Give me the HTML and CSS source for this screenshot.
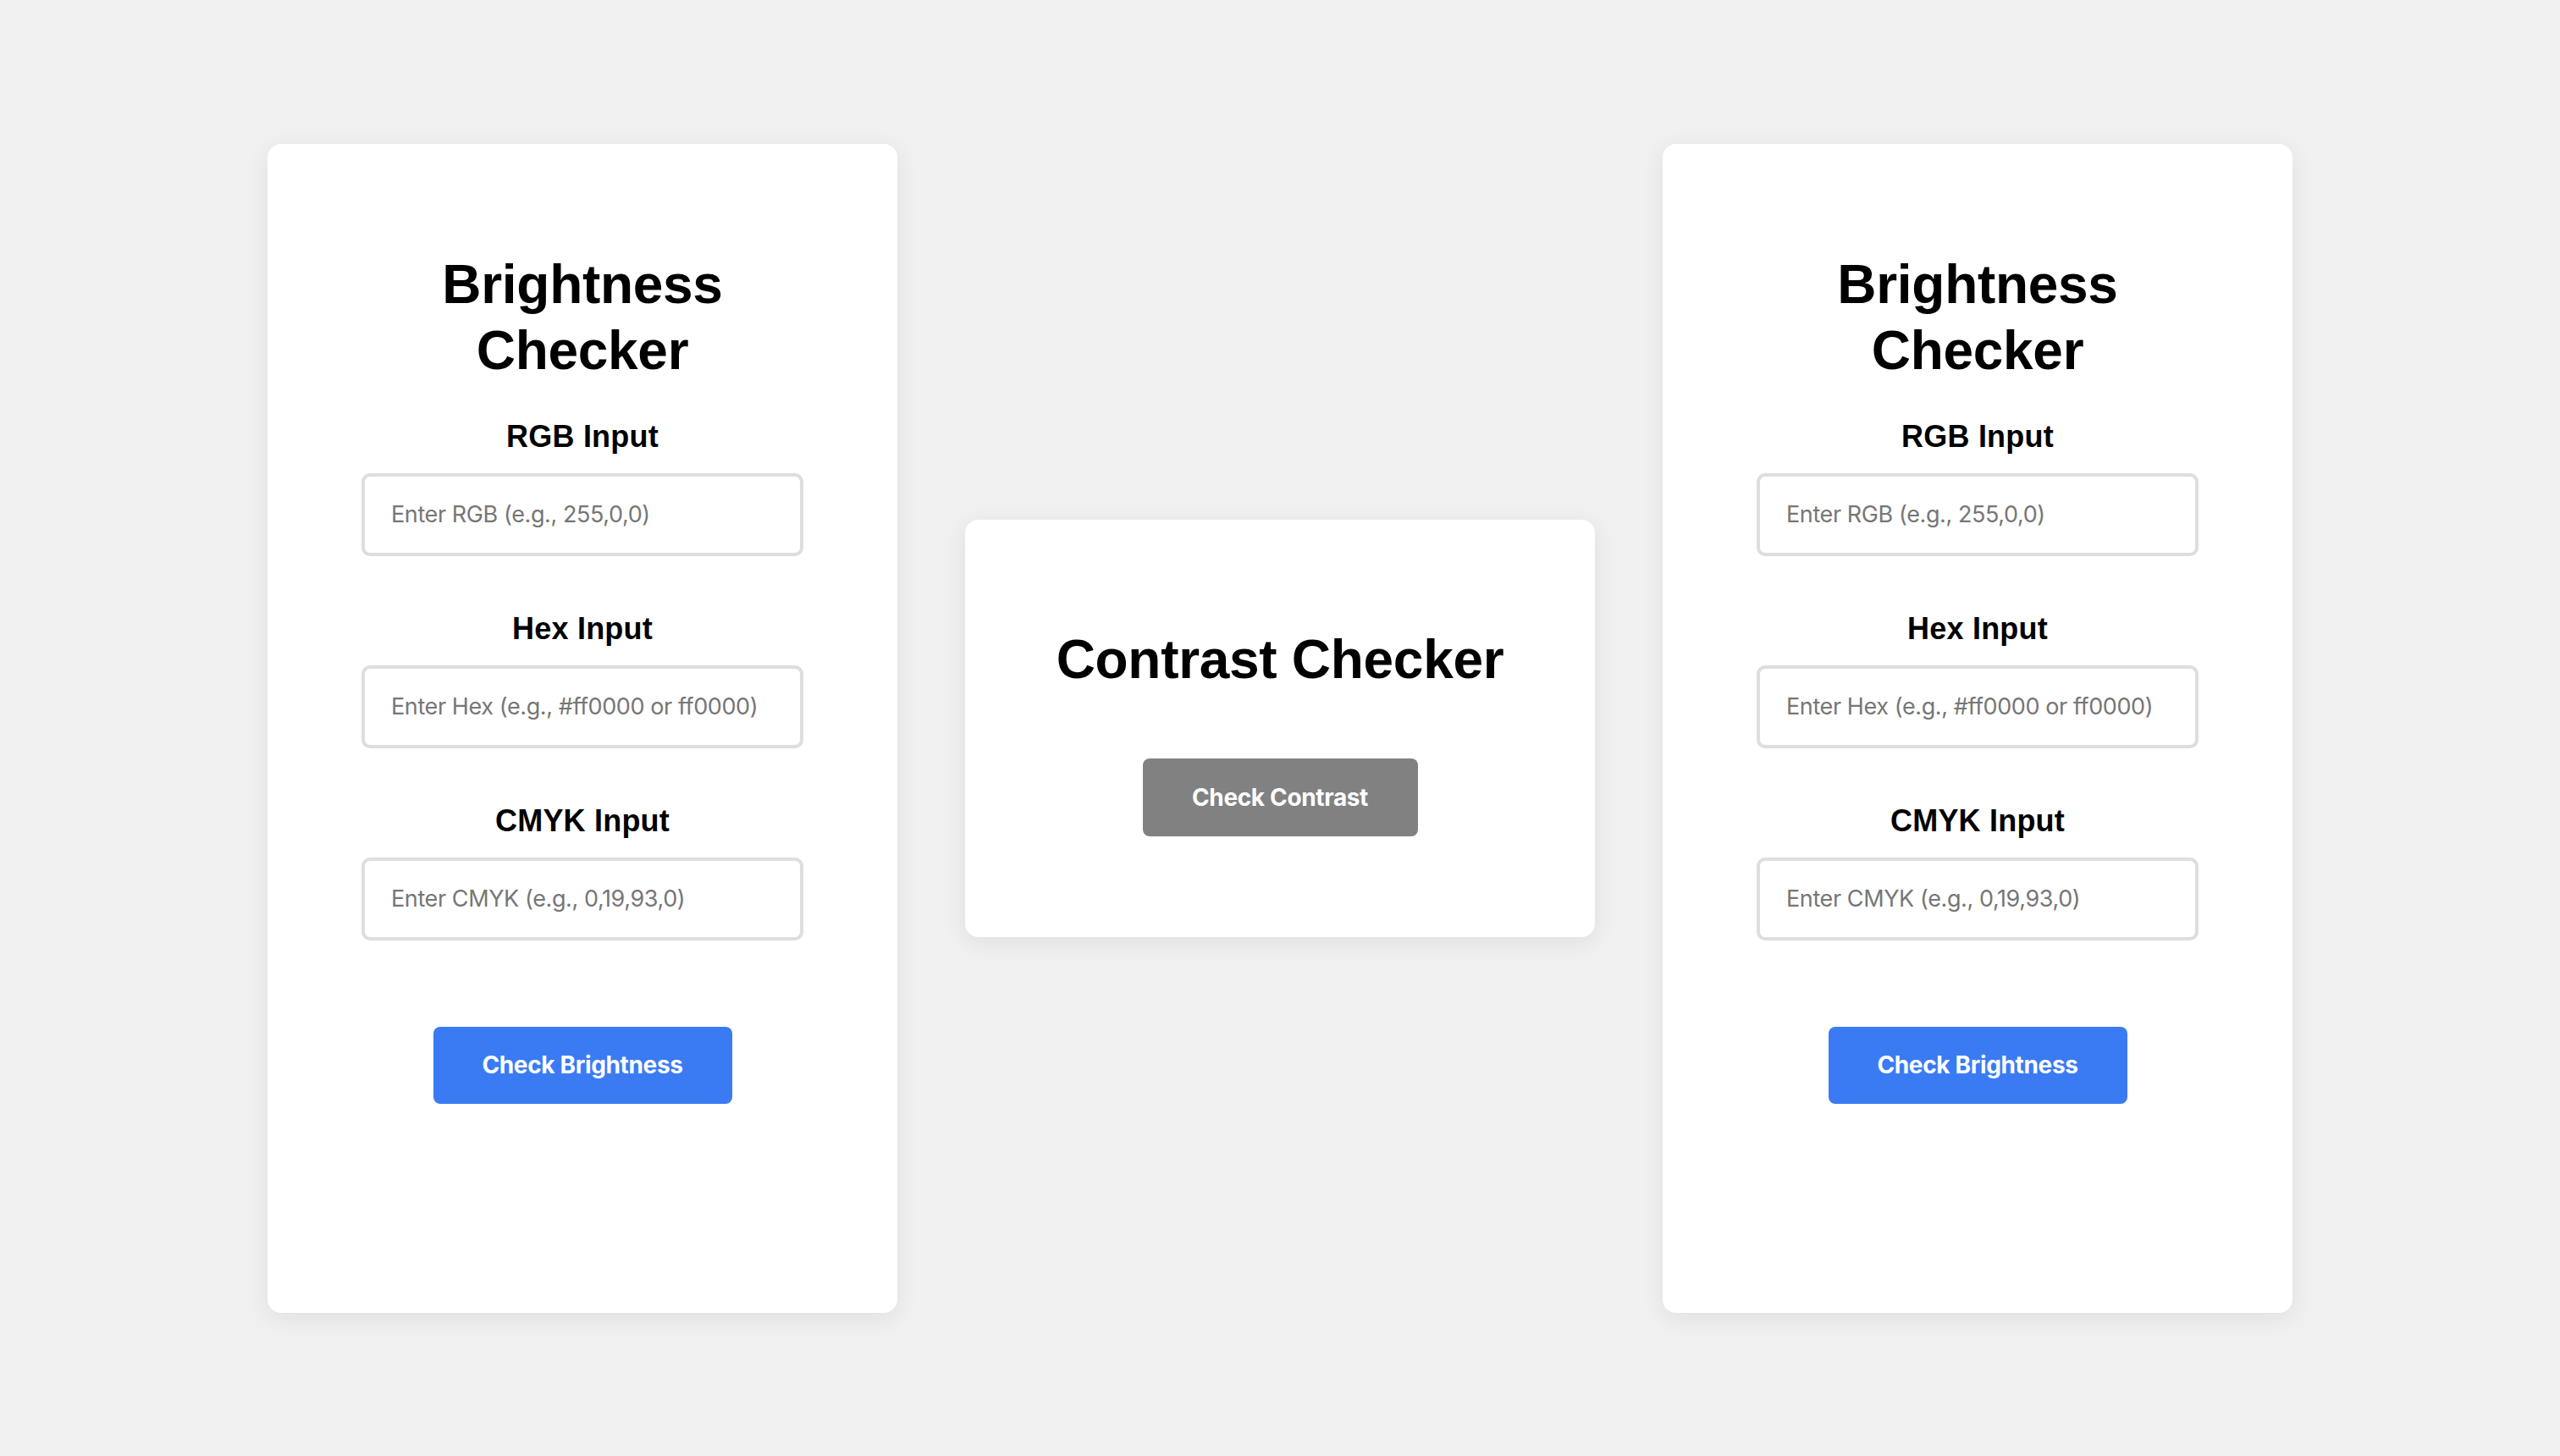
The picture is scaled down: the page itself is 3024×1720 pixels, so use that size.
FILE: index.html
```html
<!DOCTYPE html>
<html lang="en">
<head>
<meta charset="utf-8">
<title>Color Checkers</title>
<link rel="stylesheet" href="styles.css">
</head>
<body>
<main class="row">
  <section class="card card-tall">
    <h1 class="title">Brightness Checker</h1>
    <div class="field">
      <label class="label" for="rgb1">RGB Input</label>
      <input class="input" id="rgb1" type="text" placeholder="Enter RGB (e.g., 255,0,0)">
    </div>
    <div class="field">
      <label class="label" for="hex1">Hex Input</label>
      <input class="input" id="hex1" type="text" placeholder="Enter Hex (e.g., #ff0000 or ff0000)">
    </div>
    <div class="field">
      <label class="label" for="cmyk1">CMYK Input</label>
      <input class="input" id="cmyk1" type="text" placeholder="Enter CMYK (e.g., 0,19,93,0)">
    </div>
    <button class="btn btn-blue" type="button">Check Brightness</button>
  </section>

  <section class="card card-short">
    <h1 class="title">Contrast Checker</h1>
    <button class="btn btn-gray" type="button">Check Contrast</button>
  </section>

  <section class="card card-tall">
    <h1 class="title">Brightness Checker</h1>
    <div class="field">
      <label class="label" for="rgb2">RGB Input</label>
      <input class="input" id="rgb2" type="text" placeholder="Enter RGB (e.g., 255,0,0)">
    </div>
    <div class="field">
      <label class="label" for="hex2">Hex Input</label>
      <input class="input" id="hex2" type="text" placeholder="Enter Hex (e.g., #ff0000 or ff0000)">
    </div>
    <div class="field">
      <label class="label" for="cmyk2">CMYK Input</label>
      <input class="input" id="cmyk2" type="text" placeholder="Enter CMYK (e.g., 0,19,93,0)">
    </div>
    <button class="btn btn-blue" type="button">Check Brightness</button>
  </section>
</main>
</body>
</html>
```

FILE: styles.css
```css
html, body {
  margin: 0;
  padding: 0;
}

body {
  background: #f0f0f0;
  font-family: "Liberation Sans", Arial, Helvetica, sans-serif;
  color: #000;
}

.row {
  min-height: 100vh;
  display: flex;
  justify-content: center;
  align-items: center;
  gap: 80px;
}

.card {
  box-sizing: border-box;
  width: 744px;
  background: #fff;
  border-radius: 16px;
  box-shadow: 0 6px 28px rgba(0, 0, 0, 0.07);
  display: flex;
  flex-direction: column;
  align-items: center;
}

.card-tall {
  height: 1381px;
  padding: 127px 110px 0;
}

.card-short {
  padding: 126px 40px 119px;
}

.title {
  margin: 0;
  font-family: "Liberation Sans", Arial, Helvetica, sans-serif;
  font-weight: 700;
  font-size: 64px;
  line-height: 78px;
  text-align: center;
  letter-spacing: -0.3px;
}

.card-tall .title {
  margin-bottom: 41px;
}

.field {
  display: flex;
  flex-direction: column;
  align-items: center;
  width: 522px;
}

.field + .field {
  margin-top: 64px;
}

.label {
  font-weight: 700;
  font-size: 36px;
  line-height: 43px;
  margin-bottom: 22px;
  letter-spacing: 0.2px;
}

.input {
  box-sizing: border-box;
  width: 522px;
  height: 98px;
  padding: 0 20px 0 31px;
  border: 4px solid #dedede;
  border-radius: 10px;
  background: #fff;
  font-family: Inter, "Noto Sans", sans-serif;
  font-size: 27px;
  letter-spacing: -0.4px;
  color: #333;
  outline: none;
}

.input::placeholder {
  color: #767676;
}

.btn {
  border: none;
  border-radius: 8px;
  color: #fff;
  font-family: Inter, "Noto Sans", sans-serif;
  font-weight: 700;
  font-size: 28px;
  letter-spacing: -0.35px;
  height: 91px;
  cursor: pointer;
}

.btn-blue {
  width: 353px;
  margin-top: 102px;
  background: #3a7bf4;
}

.btn-gray {
  width: 325px;
  height: 92px;
  margin-top: 78px;
  background: #818181;
}
```
